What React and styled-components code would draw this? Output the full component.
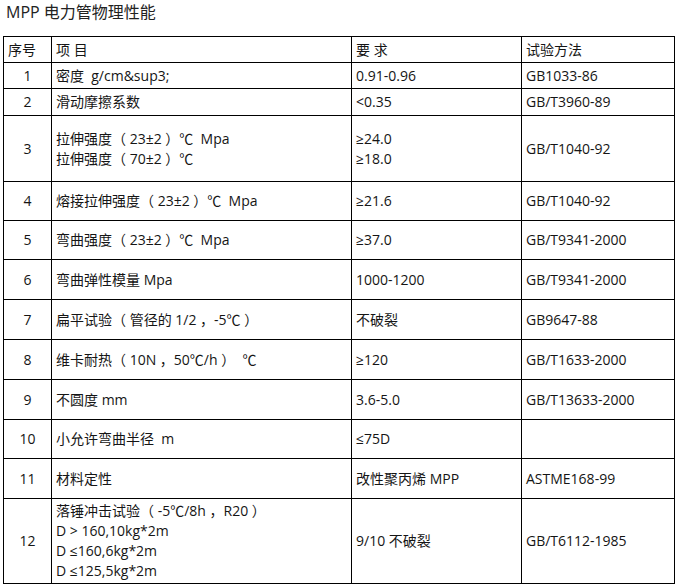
import React from 'react';
import styled, { createGlobalStyle } from 'styled-components';

const GlobalStyle = createGlobalStyle`
  html, body {
    margin: 0;
    padding: 0;
    background: #fff;
  }
  body {
    font-family: "Open Sans", "Noto Sans CJK SC", sans-serif;
    color: #151515;
  }
`;

const Page = styled.div`
  width: 680px;
  padding: 0 0 0 3px;
  box-sizing: border-box;
`;

const Title = styled.h1`
  margin: 0;
  height: 36px;
  padding: 2px 0 0 3px;
  box-sizing: border-box;
  font-size: 16px;
  font-weight: 400;
  line-height: 20px;
  color: #222;
`;

const Table = styled.table`
  border-collapse: collapse;
  width: 671px;
  table-layout: fixed;
  font-size: 14px;
  line-height: 20px;
`;

const Row = styled.tr`
  height: ${(p) => p.h}px;
`;

const Cell = styled.td`
  border: 1px solid #000;
  padding: 0 4px;
  vertical-align: middle;
  text-align: ${(p) => (p.center ? 'center' : 'left')};
  white-space: pre;
`;

const COLS = [48, 300, 170, 153];

const ROWS = [
  { h: 26, no: '1', item: ['密度  g/cm&sup3;'], req: ['0.91-0.96'], method: 'GB1033-86' },
  { h: 27, no: '2', item: ['滑动摩擦系数'], req: ['<0.35'], method: 'GB/T3960-89' },
  {
    h: 66,
    no: '3',
    item: ['拉伸强度（ 23±2 ）℃  Mpa', '拉伸强度（ 70±2 ）℃'],
    req: ['≥24.0', '≥18.0'],
    method: 'GB/T1040-92',
  },
  { h: 39, no: '4', item: ['熔接拉伸强度（ 23±2 ）℃  Mpa'], req: ['≥21.6'], method: 'GB/T1040-92' },
  { h: 39, no: '5', item: ['弯曲强度（ 23±2 ）℃  Mpa'], req: ['≥37.0'], method: 'GB/T9341-2000' },
  { h: 40, no: '6', item: ['弯曲弹性模量 Mpa'], req: ['1000-1200'], method: 'GB/T9341-2000' },
  { h: 40, no: '7', item: ['扁平试验（ 管径的 1/2 ，-5℃ ）'], req: ['不破裂'], method: 'GB9647-88' },
  { h: 40, no: '8', item: ['维卡耐热（ 10N ，50℃/h ）  ℃'], req: ['≥120'], method: 'GB/T1633-2000' },
  { h: 40, no: '9', item: ['不圆度 mm'], req: ['3.6-5.0'], method: 'GB/T13633-2000' },
  { h: 39, no: '10', item: ['小允许弯曲半径  m'], req: ['≤75D'], method: '' },
  { h: 40, no: '11', item: ['材料定性'], req: ['改性聚丙烯 MPP'], method: 'ASTME168-99' },
  {
    h: 85,
    no: '12',
    item: ['落锤冲击试验（ -5℃/8h ，R20 ）', 'D > 160,10kg*2m', 'D ≤160,6kg*2m', 'D ≤125,5kg*2m'],
    req: ['9/10 不破裂'],
    method: 'GB/T6112-1985',
  },
];

const Lines = ({ lines }) =>
  lines.map((line, i) => <div key={i}>{line}</div>);

export default function App() {
  return (
    <Page>
      <GlobalStyle />
      <Title>MPP 电力管物理性能</Title>
      <Table>
        <colgroup>
          {COLS.map((w, i) => (
            <col key={i} style={{ width: w }} />
          ))}
        </colgroup>
        <tbody>
          <Row h={26}>
            <Cell>序号</Cell>
            <Cell>项 目</Cell>
            <Cell>要 求</Cell>
            <Cell>试验方法</Cell>
          </Row>
          {ROWS.map((r) => (
            <Row key={r.no} h={r.h}>
              <Cell center>{r.no}</Cell>
              <Cell>
                <Lines lines={r.item} />
              </Cell>
              <Cell>
                <Lines lines={r.req} />
              </Cell>
              <Cell>{r.method}</Cell>
            </Row>
          ))}
        </tbody>
      </Table>
    </Page>
  );
}
